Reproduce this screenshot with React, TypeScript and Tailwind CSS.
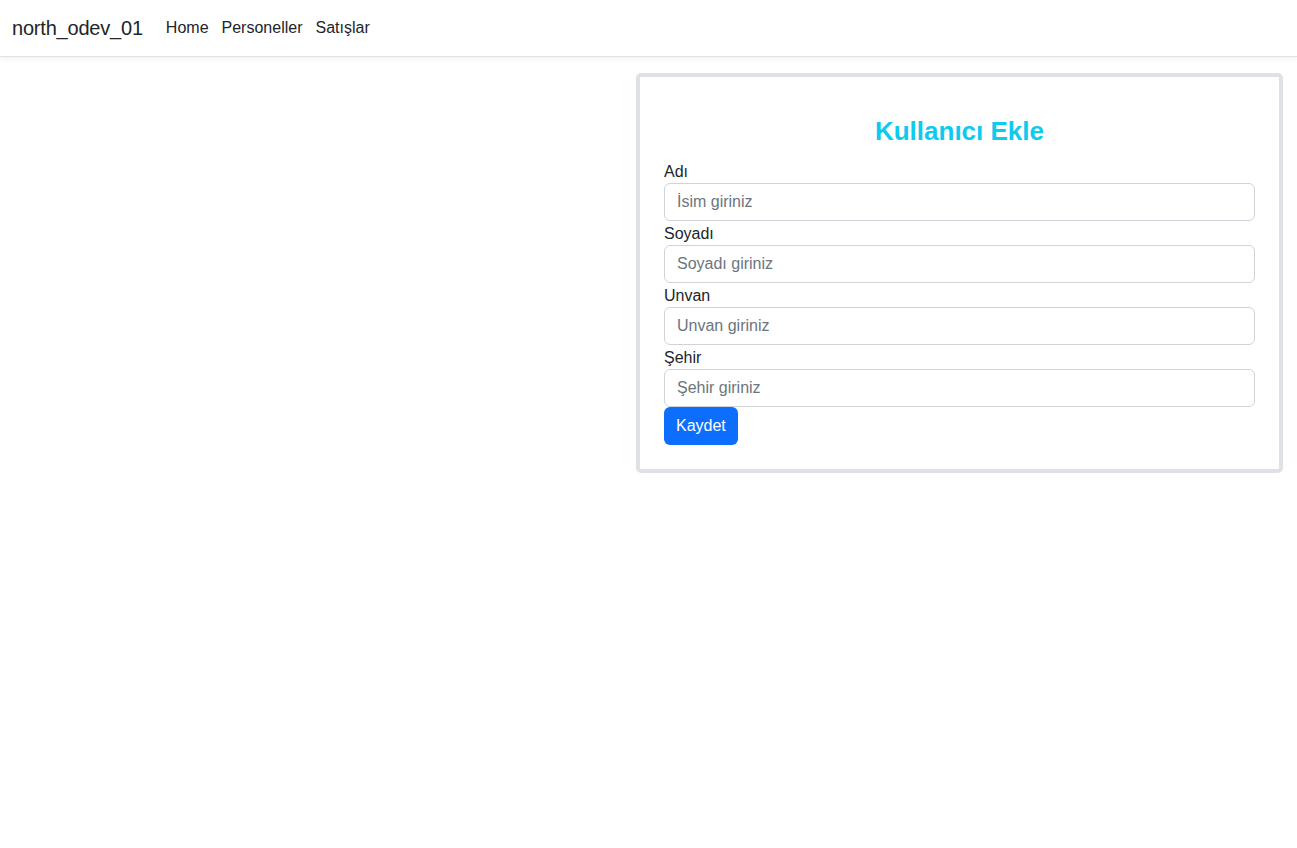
import React from "react";

const fields = [
  { label: "Adı", ph: "İsim giriniz" },
  { label: "Soyadı", ph: "Soyadı giriniz" },
  { label: "Unvan", ph: "Unvan giriniz" },
  { label: "Şehir", ph: "Şehir giriniz" },
];

export default function App() {
  return (
    <div className="min-h-[848px] bg-white text-[#212529] font-['Liberation_Sans',Arial,sans-serif]">
      <nav className="h-[57px] border-b border-[#dee2e6] shadow-[0_2px_6px_rgba(0,0,0,0.05)] flex items-center px-3">
        <a className="text-[20px] text-[#212529] mr-[23px] tracking-[-0.2px]">north_odev_01</a>
        <div className="flex items-center gap-[13px] text-[16px] text-[#212529]">
          <a>Home</a>
          <a>Personeller</a>
          <a>Satışlar</a>
        </div>
      </nav>
      <main className="flex justify-end pr-[14px] pt-[16px]">
        <div className="w-[647px] border-4 border-[#dee2e6] rounded-[5px] px-6 pt-[37px] pb-[24px]">
          <h3 className="text-center text-[26px] leading-[34px] font-bold text-[#0dcaf0] mb-[11px]">Kullanıcı Ekle</h3>
          {fields.map((f) => (
            <div key={f.label}>
              <label className="block text-[16px] leading-6 pt-[1px] -mb-[1px]">{f.label}</label>
              <input
                placeholder={f.ph}
                className="block w-full h-[38px] border border-[#ced4da] rounded-[6px] px-3 text-[16px] placeholder:text-[#6c757d] outline-none"
              />
            </div>
          ))}
          <button className="h-[38px] px-3 bg-[#0d6efd] text-white rounded-[6px] text-[16px]">Kaydet</button>
        </div>
      </main>
    </div>
  );
}
